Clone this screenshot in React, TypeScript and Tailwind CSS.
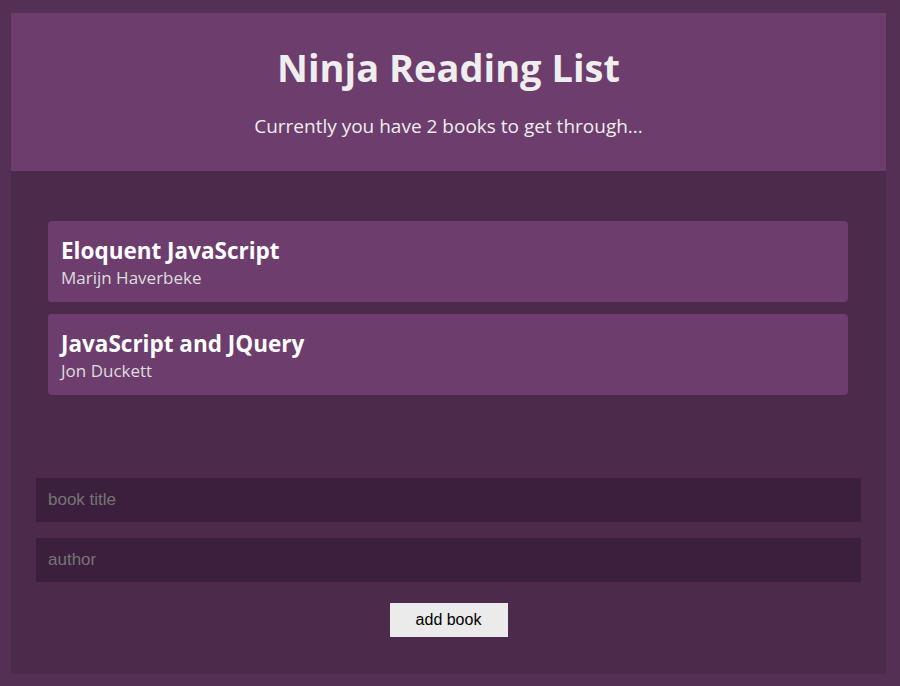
import { useState } from "react";

interface Book {
  id: number;
  title: string;
  author: string;
}

const initialBooks: Book[] = [
  { id: 1, title: "Eloquent JavaScript", author: "Marijn Haverbeke" },
  { id: 2, title: "JavaScript and JQuery", author: "Jon Duckett" },
];

const Navbar = ({ count }: { count: number }) => (
  <div className="bg-[#6d3d6d] pt-[27px] pb-[32px] px-5 text-center text-[#eee]">
    <h1 className="text-[38px] leading-[54px] font-bold">Ninja Reading List</h1>
    <p className="mt-[19px] text-[19px] leading-[26px]">
      Currently you have {count} books to get through...
    </p>
  </div>
);

const BookList = ({ books }: { books: Book[] }) => (
  <ul className="flex flex-col gap-3 pl-[37px] pr-[38px] pt-[50px]">
    {books.map((b) => (
      <li key={b.id} className="rounded bg-[#6d3d6d] px-[13px] pt-[16px] pb-[11px]">
        <div className="text-[22.5px] leading-[28px] font-bold text-white">{b.title}</div>
        <div className="text-[17px] leading-[26px] text-[#ddd]">{b.author}</div>
      </li>
    ))}
  </ul>
);

const BookForm = () => {
  const [title, setTitle] = useState("");
  const [author, setAuthor] = useState("");
  return (
    <form
      className="flex flex-col px-[25px] pt-[83px] pb-[37px] font-['Liberation_Sans',Arial,sans-serif]"
      onSubmit={(e) => e.preventDefault()}
    >
      <input
        value={title}
        onChange={(e) => setTitle(e.target.value)}
        placeholder="book title"
        className="h-[44px] w-full bg-[#3c1f3c] px-3 text-[17px] text-white outline-none placeholder:text-[#757575]"
      />
      <input
        value={author}
        onChange={(e) => setAuthor(e.target.value)}
        placeholder="author"
        className="mt-4 h-[44px] w-full bg-[#3c1f3c] px-3 text-[17px] text-white outline-none placeholder:text-[#757575]"
      />
      <button
        type="submit"
        className="mx-auto mt-[21px] h-[34px] w-[118px] bg-[#ebebeb] text-[16px] text-black"
      >
        add book
      </button>
    </form>
  );
};

export default function App() {
  const [books] = useState(initialBooks);
  return (
    <div className="min-h-[686px] bg-[#553055] pt-[13px] pl-[11px] pr-[14px] font-['Open_Sans',sans-serif]">
      <div className="bg-[#4c2a4c]">
        <Navbar count={books.length} />
        <BookList books={books} />
        <BookForm />
      </div>
    </div>
  );
}
